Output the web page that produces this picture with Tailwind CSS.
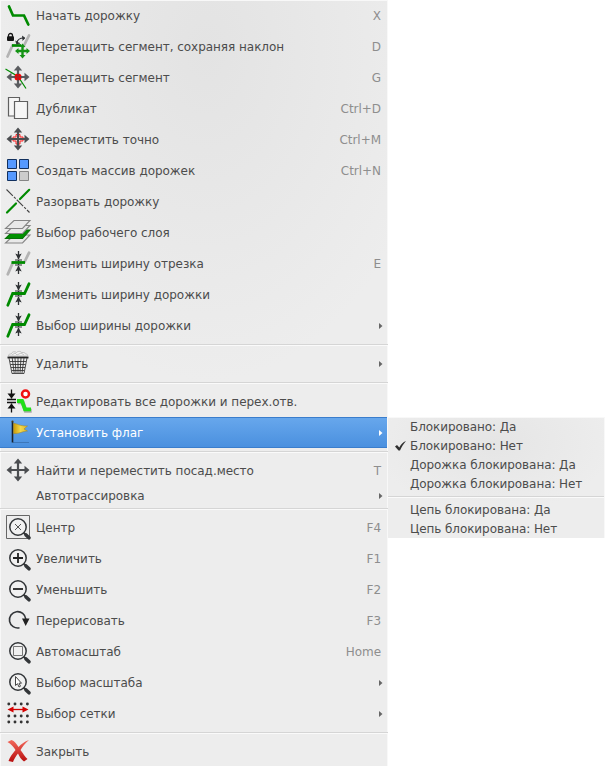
<!DOCTYPE html>
<html lang="ru">
<head>
<meta charset="utf-8">
<title>Меню дорожки</title>
<script src="https://cdn.jsdelivr.net/npm/@tailwindcss/browser@4"></script>
</head>
<body class="bg-white w-[605px] h-[767px] overflow-hidden font-['DejaVu_Sans',sans-serif] text-[12px] leading-[15px] tracking-[-0.035px] text-[#4c4c4c]">
<svg class="absolute w-0 h-0">
  <defs>
    <g id="move"><path d="M18 6v18M9 15h18" stroke="#4b4d50" stroke-width="2.200"/><path d="M18 3.500l4.200 5h-8.400zM18 26.500l4.200-5h-8.400zM6.500 15l5-4.200v8.400zM29.500 15l-5-4.200v8.400z" fill="#4b4d50"/></g>
    <g id="pinch"><path d="M18.500 3v8M18.500 26v-8M18.500 12v5" stroke="#2d3033" stroke-width="1.300"/><path d="M18.500 11.500l-3.200-6 3.200 1.200 3.200-1.200zM18.500 17.500l-3.200 6 3.200-1.200 3.200 1.200z" fill="#2d3033"/><path d="M15 12h7M15 17h7" stroke="#2d3033"/></g>
    <g id="lens"><path d="M23.500 20.500l2 2" stroke="#333" stroke-width="2"/><path d="M26 23l3 2.800" stroke="#333639" stroke-width="3.600" stroke-linecap="round"/><circle cx="18" cy="15" r="8.200" fill="#f1f1f1" stroke="#333639" stroke-width="1.500"/></g>
    <g id="wide"><path d="M7.800 26.200L12.700 14.500H24.500L29 4.800" fill="none" stroke="#008a00" stroke-width="2.800" stroke-linecap="round"/></g>
    <linearGradient id="red" x2="0" y2="1"><stop stop-color="#f2695c"/><stop offset="1" stop-color="#b80d0d"/></linearGradient>
    <linearGradient id="gold"><stop stop-color="#c99a08"/><stop offset=".5" stop-color="#f3d84a"/><stop offset="1" stop-color="#dfb62b"/></linearGradient>
  </defs>
</svg>
<div class="flex items-start">
  <nav class="w-[388px] h-[766px] shrink-0 border-l border-t border-[#f8f8f8] border-r bg-[#ededed] bg-[radial-gradient(ellipse_230px_330px_at_205px_50px,#e3e3e3,#ededed)]">
    <div class="-mt-px -ml-px w-[388px]">
      <div class="flex h-[31px] items-center"><svg class="w-9 h-[31px] shrink-0" viewBox="0 0 36 31"><path d="M9 6.500L13 15.500H24L28.300 24.500" fill="none" stroke="#008a00" stroke-width="2.700" stroke-linecap="round"/></svg><span class="pt-[2px]">Начать дорожку</span><span class="ml-auto mr-[7px] pt-[2px] text-[#8e8e8e]">X</span></div>
      <div class="flex h-[31px] items-center"><svg class="w-9 h-[31px] shrink-0" viewBox="0 0 36 31"><path d="M7.500 25.500L12.500 14.500M23.500 15.500L29 4.500" stroke="#b3b3b3" stroke-width="2.700" stroke-linecap="round"/><path d="M12 14.500h9" stroke="#008a00" stroke-width="2.700"/><rect x="7" y="5.300" width="7" height="4.800" rx="1" fill="#151515"/><path d="M8.500 6V4.500a2 2 0 0 1 4 0V6" fill="none" stroke="#151515" stroke-width="1.300"/><path d="M17 12c.3-3 3-5 7-5" fill="none" stroke="#2d3033" stroke-width="1.200"/><path d="M15.700 9.700l1 3.500 3.300-1M22 5l3 2-2.400 2.500" fill="#2d3033" stroke="#2d3033" stroke-width=".7"/><path d="M22.500 15v10M17 20h11" stroke="#149414" stroke-width="2.400"/><path d="M22.500 12.500l3 3.500h-6zM22.500 27.500l3-3.500h-6zM15 20l3.500-3v6zM30 20l-3.500-3v6z" fill="#149414"/></svg><span class="pt-[2px]">Перетащить сегмент, сохраняя наклон</span><span class="ml-auto mr-[7px] pt-[2px] text-[#8e8e8e]">D</span></div>
      <div class="flex h-[31px] items-center"><svg class="w-9 h-[31px] shrink-0" viewBox="0 0 36 31"><path d="M5.500 7L18 14.500 26 26.500" fill="none" stroke="#008a00" stroke-width="1.200"/><circle cx="18" cy="15" r="3.600" fill="#f00"/><use href="#move" opacity=".9"/><circle cx="18" cy="15" r="3" fill="#f00" opacity=".6"/></svg><span class="pt-[2px]">Перетащить сегмент</span><span class="ml-auto mr-[7px] pt-[2px] text-[#8e8e8e]">G</span></div>
      <div class="flex h-[31px] items-center"><svg class="w-9 h-[31px] shrink-0" viewBox="0 0 36 31"><g fill="#f6f6f6" stroke="#606060" stroke-width="1.200"><path d="M8.500 4.500h11v18.500h-11z"/><path d="M14.500 8.500h13v17h-13z"/></g></svg><span class="pt-[2px]">Дубликат</span><span class="ml-auto mr-[7px] pt-[2px] text-[#8e8e8e]">Ctrl+D</span></div>
      <div class="flex h-[31px] items-center"><svg class="w-9 h-[31px] shrink-0" viewBox="0 0 36 31"><path d="M16 10.500h4v2.500h3v4h-3v3h-4v-3h-3v-4h3z" fill="#f4dede" stroke="#f22"/><use href="#move"/></svg><span class="pt-[2px]">Переместить точно</span><span class="ml-auto mr-[7px] pt-[2px] text-[#8e8e8e]">Ctrl+M</span></div>
      <div class="flex h-[31px] items-center"><svg class="w-9 h-[31px] shrink-0" viewBox="0 0 36 31"><path d="M7.500 4.500h9v9h-9zM19.500 4.500h9v9h-9zM7.500 16.500h9v9h-9z" fill="#5599ff" stroke="#12305e"/><path d="M19.500 16.500h9v9h-9z" fill="#ccc" stroke="#858585"/></svg><span class="pt-[2px]">Создать массив дорожек</span><span class="ml-auto mr-[7px] pt-[2px] text-[#8e8e8e]">Ctrl+N</span></div>
      <div class="flex h-[31px] items-center"><svg class="w-9 h-[31px] shrink-0" viewBox="0 0 36 31"><path d="M7 26.500L16 17.500M20 13L29.200 3.800" stroke="#008a00" stroke-width="2.200" stroke-linecap="round"/><path d="M6.500 3.500L29.500 26.500" stroke="#444" stroke-width="1.100" stroke-dasharray="9 1.500 2.500 1.500"/></svg><span class="pt-[2px]">Разорвать дорожку</span></div>
      <div class="flex h-[31px] items-center"><svg class="w-9 h-[31px] shrink-0" viewBox="0 0 36 31"><g fill="#e9e9e9" stroke="#858585" stroke-width="1.100"><path d="M14 18h16l-7.500 8H5.500z"/><path d="M14 13h16l-7.500 8.500H5.500z" fill="#009000" stroke="#087008"/><path d="M14 8.500h16l-7.500 8H5.500z"/><path d="M14 3.500h16l-7.500 8H5.500z"/></g></svg><span class="pt-[2px]">Выбор рабочего слоя</span></div>
      <div class="flex h-[31px] items-center"><svg class="w-9 h-[31px] shrink-0" viewBox="0 0 36 31"><path d="M7.800 26.200L12.500 15.500M24.500 14L29 4.800" stroke="#b3b3b3" stroke-width="2.800" stroke-linecap="round"/><use href="#pinch"/><path d="M11.500 14.500H25" stroke="#008a00" stroke-width="2.800"/></svg><span class="pt-[2px]">Изменить ширину отрезка</span><span class="ml-auto mr-[7px] pt-[2px] text-[#8e8e8e]">E</span></div>
      <div class="flex h-[31px] items-center"><svg class="w-9 h-[31px] shrink-0" viewBox="0 0 36 31"><use href="#pinch"/><use href="#wide"/></svg><span class="pt-[2px]">Изменить ширину дорожки</span></div>
      <div class="flex h-[31px] items-center"><svg class="w-9 h-[31px] shrink-0" viewBox="0 0 36 31"><use href="#pinch"/><use href="#wide"/></svg><span class="pt-[2px]">Выбор ширины дорожки</span><svg class="ml-auto mr-[5px] w-1 h-[6px]" viewBox="0 0 4 6"><path d="M0 0l3.500 3L0 6z" fill="#666"/></svg></div>
      <div class="h-[7px] pt-[3px]"><div class="h-[2px] border-t border-t-[#d5d5d5] bg-[#fafafa]"></div></div>
      <div class="flex h-[31px] items-center"><svg class="w-9 h-[31px] shrink-0" viewBox="0 0 36 31"><path d="M8.500 8c0-2 1-2 3-2 0-2 3-3 5-1.500 2-2 5-1 5 0 3-.5 4 1 4 1.500 2 0 2.500 1 2 2z" fill="#f3f3f3" stroke="#b5b5b5" stroke-width=".8"/><path d="M12 7l3-2 2 2 4-2 3 2" fill="none" stroke="#c5c5c5"/><path d="M7.500 9.500h21" stroke="#252525" stroke-width="1.800"/><path d="M9 10l3 15.500h12L27 10M12.200 10l2 15M15 10l1 15M18 10v15M21 10l-1 15M24 10l-2 15M10 13.500h16M10.500 16.500h15M11 19.500h14M12 22.500h12" fill="none" stroke="#303030" stroke-width=".85"/></svg><span class="pt-[2px]">Удалить</span><svg class="ml-auto mr-[5px] w-1 h-[6px]" viewBox="0 0 4 6"><path d="M0 0l3.500 3L0 6z" fill="#666"/></svg></div>
      <div class="h-[7px] pt-[3px]"><div class="h-[2px] border-t border-t-[#d5d5d5] bg-[#fafafa]"></div></div>
      <div class="flex h-[31px] items-center"><svg class="w-9 h-[31px] shrink-0" viewBox="0 0 36 31"><path d="M7 13.500h9M7 16.500h9" stroke="#111" stroke-width="1.500"/><path d="M11.500 3.500v9M11.500 26.500v-9" stroke="#111" stroke-width="1.300"/><path d="M11.500 12.500l-4-5h8zM11.500 17.500l-4 5h8z" fill="#111"/><path d="M17 15.500h5l3 8.500h6" fill="none" stroke="#aaa" stroke-width="4" transform="translate(.7 .8)"/><path d="M17 15h5l3 8.300h6" fill="none" stroke="#21df18" stroke-width="3.800"/><circle cx="25.500" cy="8" r="3.500" fill="#fff" stroke="#f01010" stroke-width="2.500"/></svg><span class="pt-[2px]">Редактировать все дорожки и перех.отв.</span></div>
      <div class="flex h-[31px] w-[387px] items-center border-y border-[#3a7dcc] bg-linear-to-b from-[#67a7ec] to-[#4a90df] text-white"><svg class="w-9 h-[31px] shrink-0" viewBox="0 0 36 31"><path d="M13 25.500h16" stroke="#244e80" opacity=".4"/><path d="M12.500 5v20.500" stroke="#17212d" stroke-width="1.600"/><circle cx="12.500" cy="4.500" r="1.100" fill="#463d20"/><path d="M13.500 6.500c4 0 5 2.500 14 2.500l-3.500 3 3.500 2c-5 0-8 3-14 2.500z" fill="url(#gold)" stroke="#a98514" stroke-width=".5"/></svg><span class="pt-[2px]">Установить флаг</span><svg class="ml-auto mr-1 w-1 h-[6px]" viewBox="0 0 4 6"><path d="M0 0l3.500 3L0 6z" fill="#fff"/></svg></div>
      <div class="h-[7px] pt-[3px]"><div class="h-[2px] border-t border-t-[#d5d5d5] bg-[#fafafa]"></div></div>
      <div class="flex h-[31px] items-center"><svg class="w-9 h-[31px] shrink-0" viewBox="0 0 36 31"><use href="#move"/></svg><span class="pt-[2px]">Найти и переместить посад.место</span><span class="ml-auto mr-[7px] pt-[2px] text-[#8e8e8e]">T</span></div>
      <div class="flex h-[19px] items-center pl-9"><span class="pt-[2px]">Автотрассировка</span><svg class="ml-auto mr-[5px] w-1 h-[6px]" viewBox="0 0 4 6"><path d="M0 0l3.500 3L0 6z" fill="#666"/></svg></div>
      <div class="h-[7px] pt-[3px]"><div class="h-[2px] border-t border-t-[#d5d5d5] bg-[#fafafa]"></div></div>
      <div class="flex h-[31px] items-center"><svg class="w-9 h-[31px] shrink-0" viewBox="0 0 36 31"><path d="M6.500 3.500h23v23h-23z" fill="none" stroke="#666"/><use href="#lens"/><path d="M15 12l6 6M21 12l-6 6" stroke="#555"/></svg><span class="pt-[2px]">Центр</span><span class="ml-auto mr-[7px] pt-[2px] text-[#8e8e8e]">F4</span></div>
      <div class="flex h-[31px] items-center"><svg class="w-9 h-[31px] shrink-0" viewBox="0 0 36 31"><use href="#lens"/><path d="M13 15h10M18 10v10" stroke="#222" stroke-width="1.800"/></svg><span class="pt-[2px]">Увеличить</span><span class="ml-auto mr-[7px] pt-[2px] text-[#8e8e8e]">F1</span></div>
      <div class="flex h-[31px] items-center"><svg class="w-9 h-[31px] shrink-0" viewBox="0 0 36 31"><use href="#lens"/><path d="M13 15h10" stroke="#222" stroke-width="1.800"/></svg><span class="pt-[2px]">Уменьшить</span><span class="ml-auto mr-[7px] pt-[2px] text-[#8e8e8e]">F2</span></div>
      <div class="flex h-[31px] items-center"><svg class="w-9 h-[31px] shrink-0" viewBox="0 0 36 31"><path d="M19.500 22.800A8.200 8.200 0 1 1 25.800 14" fill="none" stroke="#333639" stroke-width="1.600"/><path d="M22 13.500h7.500L25.700 21z" fill="#222"/></svg><span class="pt-[2px]">Перерисовать</span><span class="ml-auto mr-[7px] pt-[2px] text-[#8e8e8e]">F3</span></div>
      <div class="flex h-[31px] items-center"><svg class="w-9 h-[31px] shrink-0" viewBox="0 0 36 31"><use href="#lens"/><path d="M13.500 10.500h9v9h-9z" fill="none" stroke="#777"/></svg><span class="pt-[2px]">Автомасштаб</span><span class="ml-auto mr-[7px] pt-[2px] text-[#8e8e8e]">Home</span></div>
      <div class="flex h-[31px] items-center"><svg class="w-9 h-[31px] shrink-0" viewBox="0 0 36 31"><use href="#lens"/><path d="M15.500 9.500v9l2-1.800 1.500 3.300 1.500-.8-1.500-3h2.500z" fill="#fff" stroke="#444"/></svg><span class="pt-[2px]">Выбор масштаба</span><svg class="ml-auto mr-[5px] w-1 h-[6px]" viewBox="0 0 4 6"><path d="M0 0l3.500 3L0 6z" fill="#666"/></svg></div>
      <div class="flex h-[31px] items-center"><svg class="w-9 h-[31px] shrink-0" viewBox="0 0 36 31"><path d="M8.800 6h19M8.800 18h19M8.800 24h19" stroke="#333" stroke-width="2.900" stroke-linecap="round" stroke-dasharray="0 6.200"/><path d="M11 11.500h14" stroke="#d40000" stroke-width="1.300"/><path d="M7.500 11.500l6-3v6zM28.500 11.500l-6-3v6z" fill="#d40000"/></svg><span class="pt-[2px]">Выбор сетки</span><svg class="ml-auto mr-[5px] w-1 h-[6px]" viewBox="0 0 4 6"><path d="M0 0l3.500 3L0 6z" fill="#666"/></svg></div>
      <div class="h-[7px] pt-[3px]"><div class="h-[2px] border-t border-t-[#d5d5d5] bg-[#fafafa]"></div></div>
      <div class="flex h-[31px] items-center"><svg class="w-9 h-[31px] shrink-0" viewBox="0 0 36 31"><path d="M7.500 6l4-2c3 1 5 4 7 7 3-3 6-5.500 10.500-7-4 3.500-6.500 6.500-8.500 10 3 4 4.500 7 7 9l-3.500 2.500c-3-2-4.500-5-6-8-2.500 3-4 6-5 8.500L8.500 25c1.500-4 4-7.500 7-11-2-3-4-6-8-8z" fill="url(#red)"/></svg><span class="pt-[2px]">Закрыть</span></div>
    </div>
  </nav>
  <nav class="mt-[417px] w-[217px] h-[121px] border-r border-t border-[#f8f8f8] bg-[#ebebeb] bg-[radial-gradient(ellipse_120px_70px_at_105px_25px,#e5e5e5,#ededed)] tracking-[-0.08px]">
    <div class="-mt-px">
      <div class="flex h-[19px] items-center pl-[22px] pt-[2px]">Блокировано: Да</div>
      <div class="flex h-[19px] items-center"><svg class="w-[22px] h-[19px] shrink-0" viewBox="0 0 22 19"><path d="M7 10.500l2-1.500 2.300 2.500C13 8.500 15 6 18 5c-2.500 3-4.500 6-6 9.500h-1.500z" fill="#303030"/></svg><span class="pt-[2px]">Блокировано: Нет</span></div>
      <div class="flex h-[19px] items-center pl-[22px] pt-[2px]">Дорожка блокирована: Да</div>
      <div class="flex h-[19px] items-center pl-[22px] pt-[2px]">Дорожка блокирована: Нет</div>
      <div class="h-[7px] pt-[3px]"><div class="h-[2px] border-t border-t-[#d5d5d5] bg-[#fafafa]"></div></div>
      <div class="flex h-[19px] items-center pl-[22px] pt-[2px]">Цепь блокирована: Да</div>
      <div class="flex h-[19px] items-center pl-[22px] pt-[2px]">Цепь блокирована: Нет</div>
    </div>
  </nav>
</div>
</body>
</html>
